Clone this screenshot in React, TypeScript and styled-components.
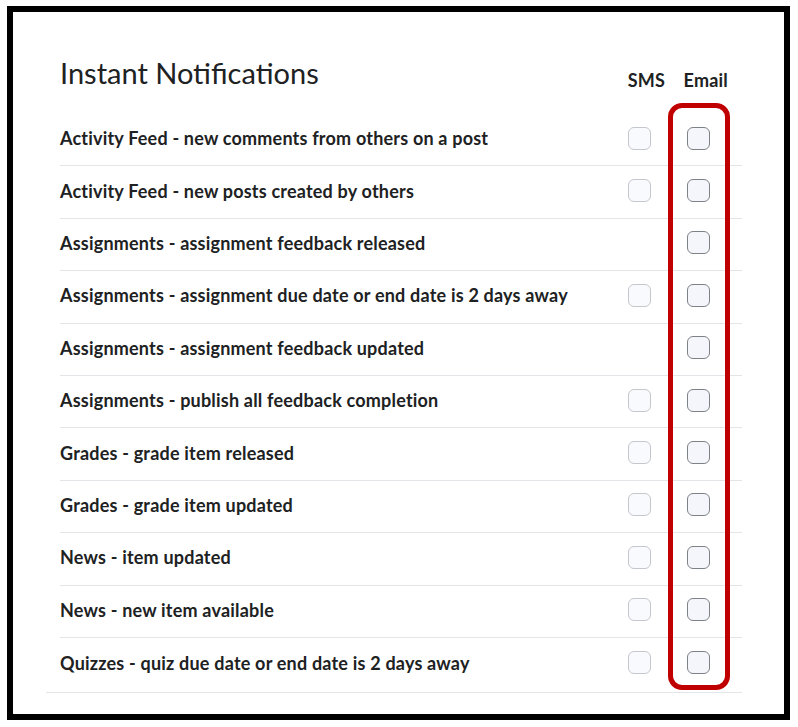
import React from "react";
import styled, { createGlobalStyle } from "styled-components";

const GlobalStyle = createGlobalStyle`
  html, body {
    margin: 0;
    padding: 0;
    background: #ffffff;
  }
  body {
    font-family: Lato, "Open Sans", Arial, sans-serif;
    color: #202122;
  }
`;

const Frame = styled.div`
  position: relative;
  box-sizing: border-box;
  width: 783px;
  height: 714px;
  margin: 6px 0 0 7px;
  border: 6px solid #000000;
  background: #ffffff;
  padding: 43px 42px 0 47px;
`;

const Header = styled.div`
  display: flex;
  align-items: flex-end;
  padding-right: 14px;
`;

const Title = styled.h2`
  flex: 1;
  margin: 0;
  font-size: 29px;
  line-height: 35px;
  font-weight: 400;
  color: #202122;
`;

const ColumnHead = styled.div<{ $width: number }>`
  width: ${({ $width }) => $width}px;
  text-align: right;
  font-size: 18px;
  line-height: 20px;
  letter-spacing: 0.2px;
  font-weight: 700;
  color: #202122;
`;

const List = styled.div`
  margin-top: 24px;
`;

const Row = styled.div`
  box-sizing: border-box;
  display: flex;
  align-items: center;
  height: 52.4px;
  padding: 0 14px 3px 0;
  border-bottom: 1px solid #e3e5e8;

  &:last-child {
    border-bottom: none;
  }
`;

const Label = styled.div`
  flex: 1;
  font-size: 18px;
  line-height: 22px;
  letter-spacing: 0.2px;
  font-weight: 700;
  color: #202122;
`;

const Cell = styled.div<{ $width: number }>`
  width: ${({ $width }) => $width}px;
  display: flex;
  justify-content: center;
`;

const Box = styled.span<{ $strong?: boolean }>`
  box-sizing: border-box;
  display: block;
  width: 23px;
  height: 23px;
  border-radius: 6px;
  border: ${({ $strong }) => ($strong ? "1.5px solid #7d8287" : "1px solid #c4c7cc")};
  background: ${({ $strong }) => ($strong ? "#f4f6fb" : "#f9fafd")};
`;

const BottomRule = styled.div`
  margin: 2px 0 0 -14px;
  border-top: 1px solid #e3e5e8;
`;

const Highlight = styled.div`
  position: absolute;
  left: 655px;
  top: 91px;
  width: 62px;
  height: 587px;
  box-sizing: border-box;
  border: 5px solid #c00000;
  border-radius: 14px;
  pointer-events: none;
`;

const rows: { label: string; sms: boolean }[] = [
  { label: "Activity Feed - new comments from others on a post", sms: true },
  { label: "Activity Feed - new posts created by others", sms: true },
  { label: "Assignments - assignment feedback released", sms: false },
  { label: "Assignments - assignment due date or end date is 2 days away", sms: true },
  { label: "Assignments - assignment feedback updated", sms: false },
  { label: "Assignments - publish all feedback completion", sms: true },
  { label: "Grades - grade item released", sms: true },
  { label: "Grades - grade item updated", sms: true },
  { label: "News - item updated", sms: true },
  { label: "News - new item available", sms: true },
  { label: "Quizzes - quiz due date or end date is 2 days away", sms: true },
];

const App = () => {
  return (
    <>
      <GlobalStyle />
      <Frame>
        <Header>
          <Title>Instant Notifications</Title>
          <ColumnHead $width={55}>SMS</ColumnHead>
          <ColumnHead $width={63}>Email</ColumnHead>
        </Header>
        <List>
          {rows.map((row) => (
            <Row key={row.label}>
              <Label>{row.label}</Label>
              <Cell $width={58}>{row.sms && <Box />}</Cell>
              <Cell $width={60}>
                <Box $strong />
              </Cell>
            </Row>
          ))}
        </List>
        <BottomRule />
        <Highlight />
      </Frame>
    </>
  );
};

export default App;
